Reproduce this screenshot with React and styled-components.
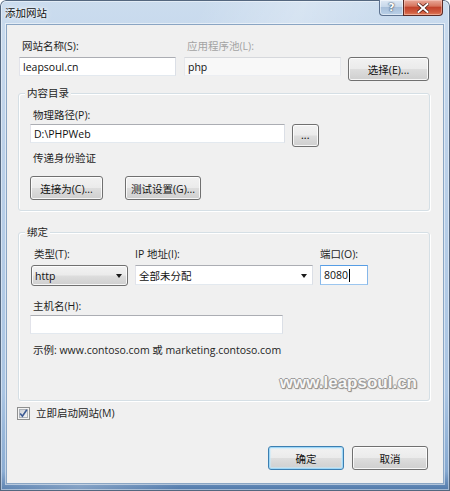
import styled, { createGlobalStyle } from 'styled-components';

const GlobalStyle = createGlobalStyle`
  html, body {
    margin: 0;
    padding: 0;
    background: #ffffff;
  }
  body {
    font-family: "Open Sans", "Noto Sans CJK SC", sans-serif;
    font-size: 10.5px;
    color: #1e1e1e;
  }
`;

const App = () => {
  return (
    <>
      <GlobalStyle />
      <Window>
        <TitleBar>
          <TitleText>添加网站</TitleText>
          <CaptionButtons>
            <HelpButton>?</HelpButton>
            <CloseButton>
              <svg width='12' height='10' viewBox='0 0 12 10'>
                <path d='M1.5 1 L10.5 9 M10.5 1 L1.5 9' stroke='#4a1a14' strokeWidth='3.4' strokeLinecap='square' />
                <path d='M1.5 1 L10.5 9 M10.5 1 L1.5 9' stroke='#ffffff' strokeWidth='2' strokeLinecap='square' />
              </svg>
            </CloseButton>
          </CaptionButtons>
        </TitleBar>

        <Client>
          <TopRow>
            <Field>
              <Label>网站名称(S):</Label>
              <TextBox w={157}>leapsoul.cn</TextBox>
            </Field>
            <Field>
              <Label disabled>应用程序池(L):</Label>
              <TextBox w={157} disabled>php</TextBox>
            </Field>
            <Button w={81} style={{ marginTop: 19 }}>选择(E)...</Button>
          </TopRow>

          <GroupBox mt={12}>
            <GroupTitle>内容目录</GroupTitle>
            <Label mt={6}>物理路径(P):</Label>
            <Row mt={1}>
              <TextBox w={255}>D:\PHPWeb</TextBox>
              <Button w={27} h={23} small>...</Button>
            </Row>
            <Label mt={3}>传递身份验证</Label>
            <Row mt={10} gap={22}>
              <Button w={73}>连接为(C)...</Button>
              <Button w={76}>测试设置(G)...</Button>
            </Row>
          </GroupBox>

          <GroupBox mt={21} bottom={6}>
            <GroupTitle>绑定</GroupTitle>
            <BindingGrid>
              <Field>
                <Label>类型(T):</Label>
                <DropList w={97}>
                  http
                  <Arrow />
                </DropList>
              </Field>
              <Field>
                <Label flush>IP 地址(I):</Label>
                <ComboBox w={178}>
                  全部未分配
                  <Arrow />
                </ComboBox>
              </Field>
              <Field>
                <Label flush>端口(O):</Label>
                <TextBox w={48} h={20} focused>
                  8080
                  <Caret />
                </TextBox>
              </Field>
            </BindingGrid>
            <Label mt={12}>主机名(H):</Label>
            <TextBox w={253} style={{ marginTop: 1 }} />
            <Label mt={8}>示例: www.contoso.com 或 marketing.contoso.com</Label>
            <Watermark>www.leapsoul.cn</Watermark>
          </GroupBox>

          <CheckRow>
            <svg width='13' height='13' viewBox='0 0 13 13'>
              <defs>
                <linearGradient id='cbg' x1='0' y1='0' x2='1' y2='1'>
                  <stop offset='0' stopColor='#cbcfd5' />
                  <stop offset='1' stopColor='#f6f6f6' />
                </linearGradient>
              </defs>
              <rect x='0.5' y='0.5' width='12' height='12' fill='#f4f4f4' stroke='#8e8f8f' />
              <rect x='2.5' y='2.5' width='8' height='8' fill='url(#cbg)' stroke='#aeb3b9' strokeWidth='1' />
              <path d='M3.2 6.6 L5.4 9.2 L9.8 2.8' fill='none' stroke='#3c5a94' strokeWidth='1.6' />
            </svg>
            <span>立即启动网站(M)</span>
          </CheckRow>

          <ButtonBar>
            <Button w={76} primary>确定</Button>
            <Button w={76}>取消</Button>
          </ButtonBar>
        </Client>
      </Window>
    </>
  );
};

const Window = styled.div`
  width: 450px;
  height: 491px;
  box-sizing: border-box;
  display: flex;
  flex-direction: column;
  padding: 0 7px 8px;
  border-radius: 6px 6px 0 0;
  box-shadow: inset 0 0 0 1px #54677f, inset 0 0 0 2px rgba(255, 255, 255, 0.45);
  background:
    linear-gradient(115deg, rgba(255, 255, 255, 0) 30%, rgba(255, 255, 255, 0.25) 45%, rgba(255, 255, 255, 0) 60%),
    linear-gradient(180deg, #cbdcee 0%, #bcd1e9 30%, #aac5e3 80%, #86a9d1 96%, #4f77a8 100%);
`;

const TitleBar = styled.div`
  height: 25px;
  margin: 0 -7px;
  padding: 0 7px 0 5px;
  display: flex;
  align-items: flex-start;
  justify-content: space-between;
`;

const TitleText = styled.div`
  line-height: 25px;
  font-family: "Noto Sans CJK SC", sans-serif;
  font-size: 10.5px;
  color: #111;
  text-shadow: 0 0 6px #ffffff, 0 0 3px #ffffff;
`;

const CaptionButtons = styled.div`
  display: flex;
  height: 17px;
`;

const HelpButton = styled.div`
  width: 24px;
  height: 16px;
  box-sizing: border-box;
  border: 1px solid #5d7290;
  border-top: none;
  border-right: none;
  border-radius: 0 0 0 4px;
  background: linear-gradient(180deg, #dfe9f4 0%, #c7d8ea 45%, #a9c0da 50%, #b9d0e8 100%);
  box-shadow: inset 0 0 0 1px rgba(255, 255, 255, 0.5);
  display: flex;
  align-items: center;
  justify-content: center;
  font-family: "DejaVu Sans", sans-serif;
  font-weight: bold;
  font-size: 11px;
  color: #ffffff;
  text-shadow: 0 0 2px #2b3d55, 0 0 1px #2b3d55;
`;

const CloseButton = styled.div`
  width: 40px;
  height: 16px;
  box-sizing: border-box;
  border: 1px solid #5b2a24;
  border-top: none;
  border-radius: 0 0 4px 0;
  background: linear-gradient(180deg, #e9a99a 0%, #d7765f 40%, #c2432c 50%, #d05a3e 80%, #e07e5b 100%);
  box-shadow: inset 0 0 0 1px rgba(255, 220, 210, 0.45);
  display: flex;
  align-items: center;
  justify-content: center;
`;

const Client = styled.div`
  width: 436px;
  height: 458px;
  box-sizing: border-box;
  background: #f0f0f0;
  box-shadow: 0 0 0 1px #8aa5c3, 0 0 0 2px rgba(255, 255, 255, 0.5);
  display: flex;
  flex-direction: column;
  padding-top: 13px;
`;

const TopRow = styled.div`
  display: flex;
  align-items: flex-start;
  gap: 8px;
  padding-left: 12px;
  & > div:last-child {
    margin-left: -1px;
  }
`;

const Field = styled.div`
  display: flex;
  flex-direction: column;
  gap: 3px;
`;

const Label = styled.div`
  line-height: 16px;
  padding-left: ${(props) => (props.flush ? 0 : 3)}px;
  margin-top: ${(props) => props.mt || 0}px;
  color: ${(props) => (props.disabled ? '#a3a3a3' : '#1e1e1e')};
  white-space: nowrap;
`;

const TextBox = styled.div`
  position: relative;
  width: ${(props) => props.w}px;
  height: ${(props) => props.h || 19}px;
  box-sizing: border-box;
  border: 1px solid;
  border-color: ${(props) =>
    props.focused
      ? '#569de5 #86b7e9 #9cc6ef #86b7e9'
      : props.disabled
      ? '#d6d8dc #e6e8ec #eceef2 #e6e8ec'
      : '#abadb3 #dbdfe6 #e3e9ef #e2e3ea'};
  background: ${(props) => (props.disabled ? '#f8f8f8' : '#ffffff')};
  display: flex;
  align-items: center;
  padding: 0 3px;
  color: #111;
  white-space: nowrap;
`;

const Caret = styled.span`
  width: 1px;
  height: 13px;
  background: #000;
  margin-left: 1px;
`;

const Button = styled.div`
  width: ${(props) => props.w}px;
  height: ${(props) => props.h || 24}px;
  box-sizing: border-box;
  border: 1px solid ${(props) => (props.primary ? '#3c7fb1' : '#707070')};
  border-radius: 3px;
  background: linear-gradient(180deg, #f2f2f2 0%, #ebebeb 48%, #dddddd 52%, #cfcfcf 100%);
  box-shadow: ${(props) =>
    props.primary
      ? 'inset 0 0 0 1px #9fd7f7, inset 0 0 1px 2px rgba(200, 235, 252, 0.6)'
      : 'inset 0 0 0 1px rgba(255, 255, 255, 0.8)'};
  display: flex;
  align-items: center;
  justify-content: center;
  color: #111;
  font-size: ${(props) => (props.small ? '8px' : '10.5px')};
  font-weight: ${(props) => (props.small ? 'bold' : 'normal')};
  letter-spacing: ${(props) => (props.small ? '0.5px' : '0')};
  white-space: nowrap;
`;

const Row = styled.div`
  display: flex;
  align-items: flex-start;
  gap: ${(props) => props.gap || 7}px;
  margin-top: ${(props) => props.mt || 0}px;
`;

const GroupBox = styled.div`
  margin: ${(props) => props.mt}px 13px 0 11px;
  border: 1px solid #d5dfe5;
  border-radius: 3px;
  box-shadow: inset 1px 1px 0 #ffffff, 1px 1px 0 #ffffff;
  display: flex;
  flex-direction: column;
  align-items: flex-start;
  padding: 0 10px ${(props) => (props.bottom === undefined ? 10 : props.bottom)}px 11px;
`;

const GroupTitle = styled.div`
  margin: -9px 0 0 -5px;
  padding: 0 2px;
  line-height: 16px;
  background: #f0f0f0;
  color: #1e1e1e;
`;

const BindingGrid = styled.div`
  display: grid;
  grid-template-columns: 97px 178px 48px;
  column-gap: 8px;
  margin-top: 6px;
  margin-left: 1px;
  & > div:nth-child(2) {
    margin-left: -1px;
  }
  & > div:last-child {
    margin-left: -2px;
  }
`;

const DropList = styled.div`
  width: ${(props) => props.w}px;
  height: 21px;
  box-sizing: border-box;
  border: 1px solid #707070;
  border-radius: 3px;
  background: linear-gradient(180deg, #f2f2f2 0%, #ebebeb 48%, #dddddd 52%, #cfcfcf 100%);
  box-shadow: inset 0 0 0 1px rgba(255, 255, 255, 0.8);
  display: flex;
  align-items: center;
  justify-content: space-between;
  padding: 0 5px 0 3px;
  color: #111;
`;

const ComboBox = styled.div`
  width: ${(props) => props.w}px;
  height: 20px;
  box-sizing: border-box;
  border: 1px solid;
  border-color: #abadb3 #dbdfe6 #e3e9ef #e2e3ea;
  background: #ffffff;
  display: flex;
  align-items: center;
  justify-content: space-between;
  padding: 0 5px 0 3px;
  color: #111;
`;

const Arrow = styled.span`
  width: 0;
  height: 0;
  border-left: 3.5px solid transparent;
  border-right: 3.5px solid transparent;
  border-top: 4px solid #1a1a1a;
  margin-top: 1px;
`;

const Watermark = styled.div`
  align-self: flex-end;
  margin: 14px 2px 0 0;
  line-height: 22px;
  font-family: "Liberation Sans", sans-serif;
  font-weight: bold;
  font-size: 17px;
  color: #f7f7f7;
  text-shadow:
    1px 0 0 #9a9a9a,
    -1px 0 0 #9a9a9a,
    0 1px 0 #9a9a9a,
    0 -1px 0 #9a9a9a,
    1px 1px 1px #777777;
`;

const CheckRow = styled.div`
  display: flex;
  align-items: center;
  gap: 6px;
  margin: 4px 0 0 10px;
  line-height: 16px;
  color: #1e1e1e;
`;

const ButtonBar = styled.div`
  margin-top: auto;
  display: flex;
  justify-content: flex-end;
  gap: 8px;
  padding: 0 15px 13px 0;
`;

export default App;
